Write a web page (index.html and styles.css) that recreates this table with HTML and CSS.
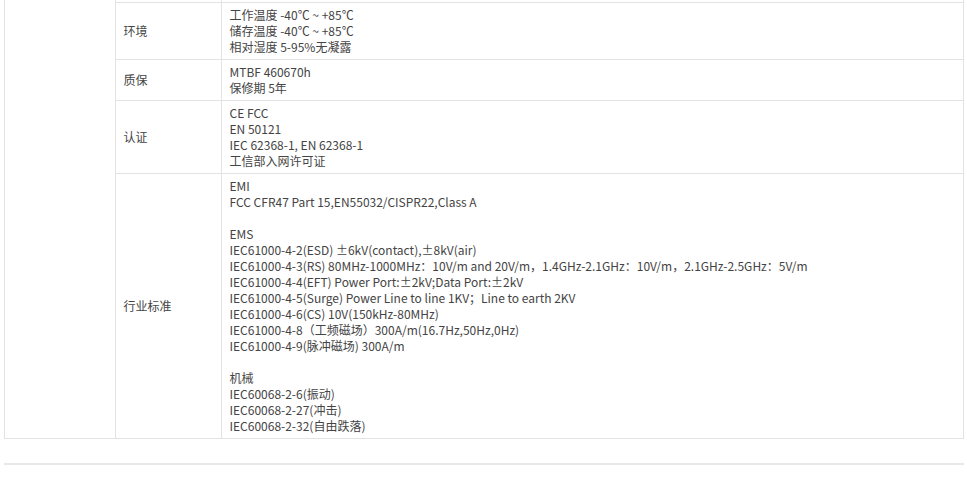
FILE: index.html
```html
<!DOCTYPE html>
<html lang="zh-CN">
<head>
    <meta charset="UTF-8">
    <meta name="viewport" content="width=device-width, initial-scale=1.0">
    <title>产品参数</title>
    <link rel="stylesheet" href="styles.css">
</head>
<body>
    <!--参数表格-->
    <div class="wrap">
        <table class="spec">
            <colgroup>
                <col class="col-group">
                <col class="col-label">
                <col>
            </colgroup>
            <tr class="cut">
                <td class="group" rowspan="5"></td>
                <td></td>
                <td></td>
            </tr>
            <tr>
                <td class="label">环境</td>
                <td class="value">
                    工作温度 -40℃ ~ +85℃<br>
                    储存温度 -40℃ ~ +85℃<br>
                    相对湿度 5-95%无凝露
                </td>
            </tr>
            <tr>
                <td class="label">质保</td>
                <td class="value">
                    MTBF 460670h<br>
                    保修期 5年
                </td>
            </tr>
            <tr>
                <td class="label">认证</td>
                <td class="value">
                    CE FCC<br>
                    EN 50121<br>
                    IEC 62368-1, EN 62368-1<br>
                    工信部入网许可证
                </td>
            </tr>
            <tr>
                <td class="label">行业标准</td>
                <td class="value">
                    EMI<br>
                    FCC CFR47 Part 15,EN55032/CISPR22,Class A<br>
                    <br>
                    EMS<br>
                    IEC61000-4-2(ESD) ±6kV(contact),±8kV(air)<br>
                    IEC61000-4-3(RS) 80MHz-1000MHz：10V/m and 20V/m，1.4GHz-2.1GHz：10V/m，2.1GHz-2.5GHz：5V/m<br>
                    IEC61000-4-4(EFT) Power Port:±2kV;Data Port:±2kV<br>
                    IEC61000-4-5(Surge) Power Line to line 1KV；Line to earth 2KV<br>
                    IEC61000-4-6(CS) 10V(150kHz-80MHz)<br>
                    IEC61000-4-8（工频磁场）300A/m(16.7Hz,50Hz,0Hz)<br>
                    IEC61000-4-9(脉冲磁场) 300A/m<br>
                    <br>
                    机械<br>
                    IEC60068-2-6(振动)<br>
                    IEC60068-2-27(冲击)<br>
                    IEC60068-2-32(自由跌落)
                </td>
            </tr>
        </table>
        <hr class="divider">
    </div>
</body>
</html>
```

FILE: styles.css
```css
/*Estilos básicos*/
body {
    font-family: "Noto Sans CJK SC", "Noto Sans", sans-serif;
    font-size: 12px;
    line-height: 16px;
    color: #444;
    margin: 0;
    padding: 0;
    background-color: #fff;
}

.wrap {
    width: 960px;
    margin: 0 auto;
}

.spec {
    width: 100%;
    border-collapse: collapse;
    table-layout: fixed;
}

.col-group {
    width: 111px;
}

.col-label {
    width: 106px;
}

.spec td {
    border: 1px solid #e3e3e3;
    padding: 4px 8px;
    vertical-align: middle;
    text-align: left;
}

.spec .cut td {
    border-top: none;
    padding: 0;
    height: 2px;
}

.spec .group {
    border-top: none;
}

.divider {
    border: none;
    border-top: 2px solid #e8e8e8;
    margin: 24px 0 0;
}
```
